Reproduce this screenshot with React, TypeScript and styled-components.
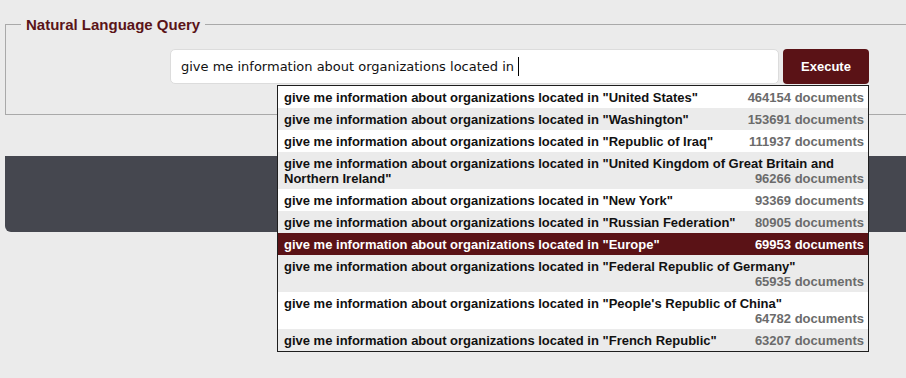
import styled, { createGlobalStyle } from "styled-components";

type Suggestion = {
  place: string;
  count: number;
};

const PREFIX = "give me information about organizations located in";

const suggestions: Suggestion[] = [
  { place: "United States", count: 464154 },
  { place: "Washington", count: 153691 },
  { place: "Republic of Iraq", count: 111937 },
  { place: "United Kingdom of Great Britain and Northern Ireland", count: 96266 },
  { place: "New York", count: 93369 },
  { place: "Russian Federation", count: 80905 },
  { place: "Europe", count: 69953 },
  { place: "Federal Republic of Germany", count: 65935 },
  { place: "People's Republic of China", count: 64782 },
  { place: "French Republic", count: 63207 },
];

const SELECTED = 6;

const App = () => {
  return (
    <Page>
      <GlobalStyle />
      <Fieldset>
        <Legend>Natural Language Query</Legend>
        <QueryRow>
          <QueryInput>
            {PREFIX}&nbsp;
            <Caret />
          </QueryInput>
          <ExecuteButton>Execute</ExecuteButton>
        </QueryRow>
      </Fieldset>

      <ResultsPanel />

      <Dropdown>
        {suggestions.map((s, i) => (
          <Option key={s.place} $odd={i % 2 === 1} $selected={i === SELECTED}>
            {PREFIX} "{s.place}"
            <Count $selected={i === SELECTED}>{s.count} documents</Count>
          </Option>
        ))}
      </Dropdown>
    </Page>
  );
};

export default App;

const GlobalStyle = createGlobalStyle`
  html, body {
    margin: 0;
    background: #ebebeb;
  }

  body {
    font-family: "Liberation Sans", Arial, sans-serif;
  }
`;

const Page = styled.div`
  position: relative;
  min-height: 378px;
  padding: 16px 0 0 5px;
`;

const Fieldset = styled.fieldset`
  margin: 0;
  padding: 0 0 30px 15px;
  border: 1px solid #a9a9a9;
  border-right: none;
`;

const Legend = styled.legend`
  padding: 0 5px;
  font-size: 15px;
  line-height: 17px;
  font-weight: 700;
  color: #5a1418;
`;

const QueryRow = styled.div`
  display: flex;
  gap: 4px;
  margin: 16px 0 0 149px;
`;

const QueryInput = styled.div`
  box-sizing: border-box;
  width: 609px;
  height: 35px;
  display: flex;
  align-items: center;
  padding: 0 10px;
  background: #fff;
  border: 1px solid #dcdcdc;
  border-radius: 5px;
  font-family: "DejaVu Sans", Verdana, sans-serif;
  font-size: 13px;
  color: #111;
  white-space: pre;
`;

const Caret = styled.span`
  display: inline-block;
  width: 1px;
  height: 19px;
  background: #000;
`;

const ExecuteButton = styled.button`
  width: 86px;
  height: 35px;
  border: none;
  border-radius: 4px;
  background: #5a1216;
  color: #fff;
  font-family: "Liberation Sans", Arial, sans-serif;
  font-size: 13px;
  font-weight: 700;
  padding: 0;
`;

const ResultsPanel = styled.div`
  height: 76px;
  margin-top: 41px;
  background: #45474f;
  border-radius: 0 0 0 6px;
`;

const Dropdown = styled.div`
  position: absolute;
  top: 85px;
  left: 277px;
  box-sizing: border-box;
  width: 592px;
  border: 1px solid #1e1e1e;
  background: #fff;
`;

const Option = styled.div<{ $odd: boolean; $selected: boolean }>`
  padding: 4px 4px 3px 6px;
  font-size: 13px;
  line-height: 15px;
  font-weight: 700;
  color: ${({ $selected }) => ($selected ? "#fff" : "#111")};
  background: ${({ $odd, $selected }) =>
    $selected ? "#5a1216" : $odd ? "#ebebeb" : "#fff"};

  &::after {
    content: "";
    display: block;
    clear: both;
  }
`;

const Count = styled.span<{ $selected: boolean }>`
  float: right;
  color: ${({ $selected }) => ($selected ? "#fff" : "#6b6b6b")};
`;
